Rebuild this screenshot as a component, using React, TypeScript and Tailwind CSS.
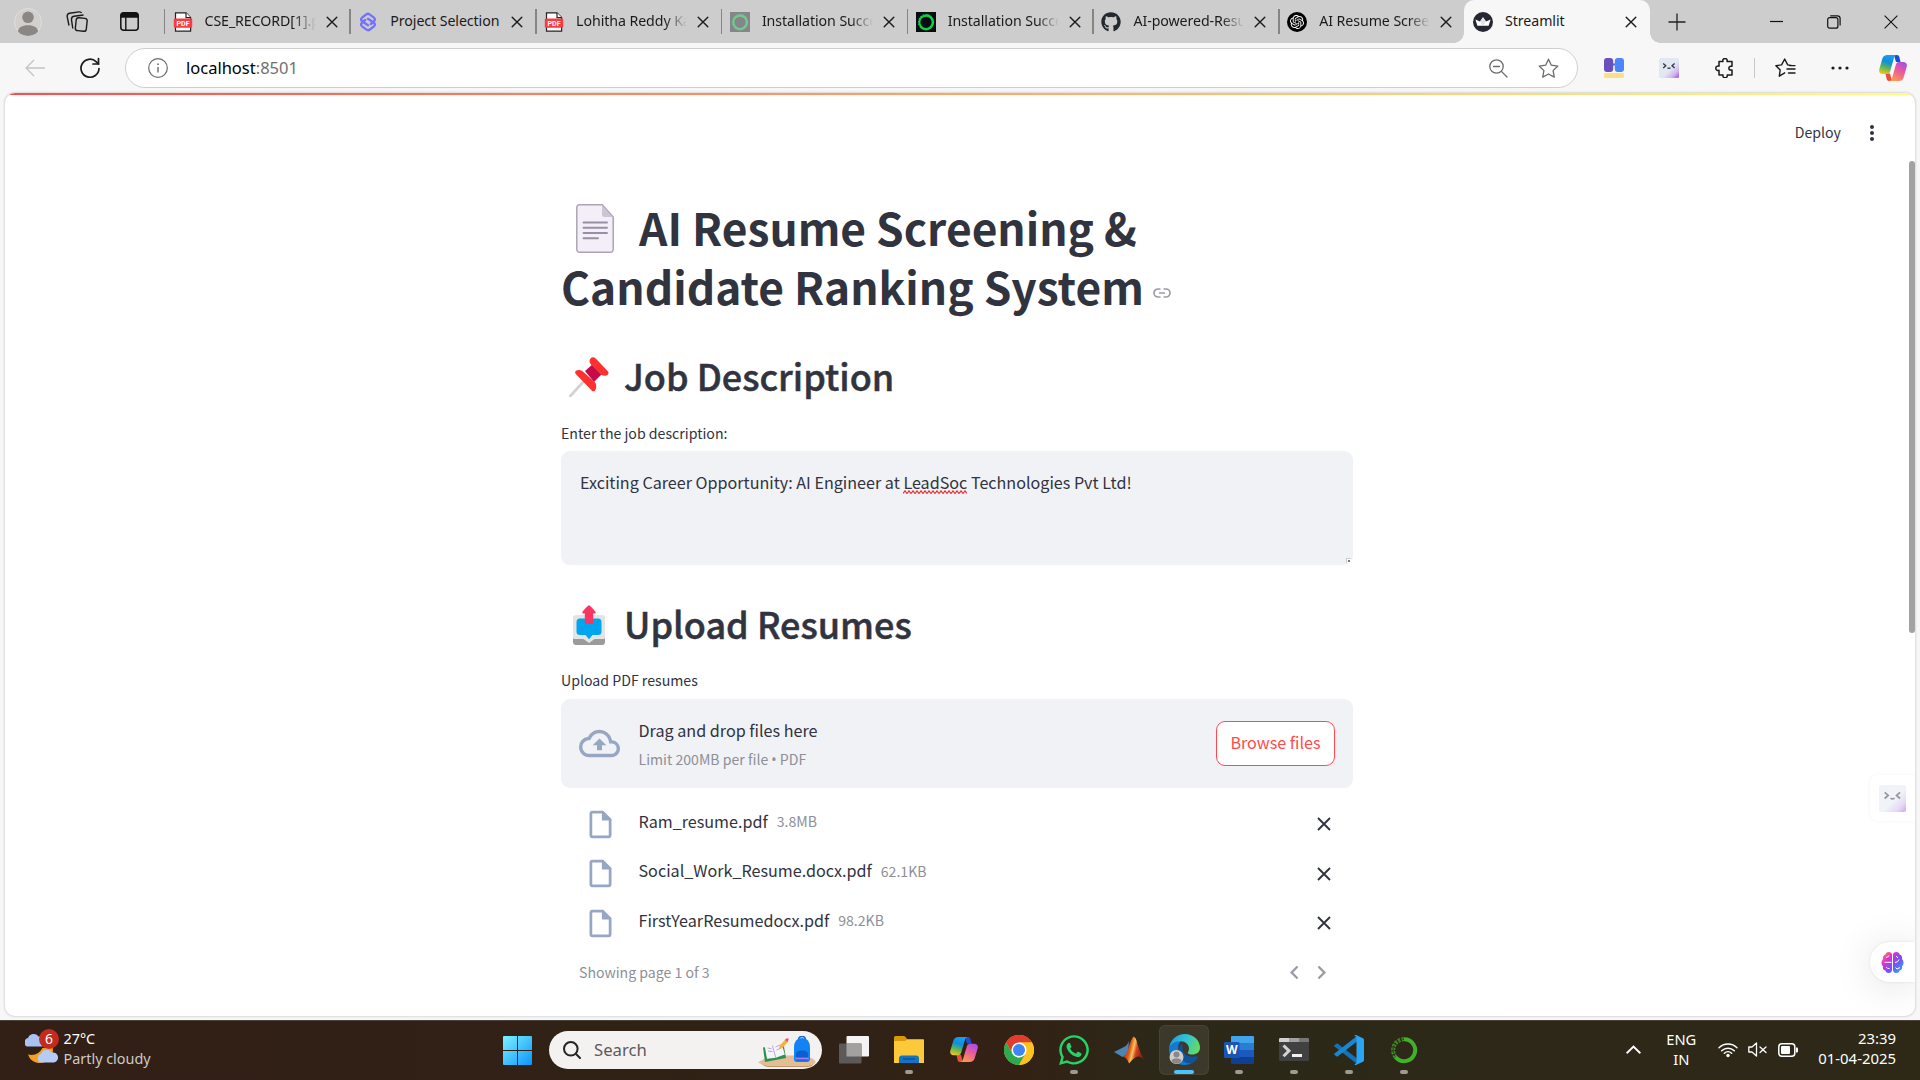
import type { ReactNode } from "react";
import { FaGithub, FaWhatsapp } from "react-icons/fa";
import { SiOpenai } from "react-icons/si";
import { MdChevronLeft, MdChevronRight, MdMoreVert, MdOutlineCloudUpload, MdOutlineInsertDriveFile } from "react-icons/md";

/* ---------- favicons ---------- */

const PdfIcon = () => (
  <svg width="20" height="20" viewBox="0 0 20 20">
    <path d="M2.5 .8h10.5l4.6 4.6v13.8H2.5z" fill="#fff" stroke="#222" strokeWidth="1.2" />
    <path d="M13 .8v4.8h4.6" fill="#fff" stroke="#222" strokeWidth="1.2" />
    <rect x=".8" y="6.5" width="18.4" height="9.3" rx="1" fill="#fb3b41" />
    <text x="10" y="13.9" textAnchor="middle" fontSize="7.2" fontWeight="700" fontFamily="Roboto, sans-serif" fill="#fff">PDF</text>
  </svg>
);

const SelectionIcon = () => (
  <svg width="20" height="20" viewBox="0 0 20 20" fill="none" stroke="#7471fb" strokeWidth="2.3" strokeLinejoin="round" strokeLinecap="round">
    <path d="M12.800 12 16 9.300Q17.800 7.500 16 5.700L11.500 2.300Q10 1.200 8.500 2.300L4 5.700Q2.200 7.500 4 9.300L10 13.200" />
    <path d="M7.200 8 4 10.700Q2.200 12.500 4 14.300L8.500 17.700Q10 18.800 11.500 17.700L16 14.300Q17.800 12.500 16 10.700L10 6.800" />
  </svg>
);

const RingIcon = ({ dim }: { dim?: boolean }) => (
  <svg width="20" height="20" viewBox="0 0 20 20">
    <rect width="20" height="20" fill={dim ? "#848689" : "#060b14"} />
    <circle cx="10" cy="10.3" r="6.9" fill="none" stroke={dim ? "#74c78e" : "#10cf41"} strokeWidth="2.6" />
    <circle cx="10" cy="10.3" r="7.8" fill="none" stroke={dim ? "#848689" : "#060b14"} strokeWidth=".9" strokeDasharray="1 2 .8 2 1 2 .8 2 1 2 1 100" transform="rotate(150 10 10.3)" />
  </svg>
);

const OpenAiIcon = () => (
  <span className="flex size-5 items-center justify-center rounded-full bg-black">
    <SiOpenai size={14} color="#fff" />
  </span>
);

const StreamlitIcon = () => (
  <svg width="20" height="20" viewBox="0 0 20 20">
    <circle cx="10" cy="10" r="10" fill="#262730" />
    <path d="M2.4 7.4 7 9.6l3-4.4 3 4.4 4.6-2.2-2 6.4H4.4z" fill="#fff" />
    <path d="M10 5.2 13 9.6l-3 4.2-3-4.2z" fill="#e3e3e6" />
  </svg>
);

const CloseX = () => (
  <svg width="12" height="12" viewBox="0 0 12 12" stroke="#1a1a1a" strokeWidth="1.4" strokeLinecap="round">
    <path d="M1.2 1.2 10.8 10.8M10.8 1.2 1.2 10.8" />
  </svg>
);

/* ---------- shared glyphs ---------- */

const Copilot = ({ id, w, h }: { id: string; w: number; h: number }) => (
  <svg width={w} height={h} viewBox="0 0 28 26" preserveAspectRatio="none">
    <defs>
      <linearGradient id={`${id}a`} x1=".5" y1="0" x2=".2" y2="1">
        <stop offset="0" stopColor="#1b9df0" />
        <stop offset=".35" stopColor="#0f8fd8" />
        <stop offset=".65" stopColor="#5fb35c" />
        <stop offset="1" stopColor="#f5cb12" />
      </linearGradient>
      <linearGradient id={`${id}b`} x1=".8" y1="0" x2=".3" y2="1">
        <stop offset="0" stopColor="#a54ee8" />
        <stop offset=".45" stopColor="#ea5a9c" />
        <stop offset="1" stopColor="#fb9a4f" />
      </linearGradient>
    </defs>
    <path d="M18 0h-3l2 7h4.6L20.400 2.200C20 .8 19.200 0 18 0z" fill="#1a4fd0" />
    <path d="M10 26h3l-2-7.500H6.400l1.200 5.300C8 25.200 8.800 26 10 26z" fill="#ee4d3a" />
    <path d="M8.500 0H18c-1.600 0-2.500 1-3 2.800l-3.800 13.400c-.5 1.600-1.500 2.800-3.200 2.800H3.800C.8 19-.3 17 .3 14.300L3.400 3.600C4.100 1.300 5.800 0 8.500 0z" fill={`url(#${id}a)`} />
    <path d="M19.500 26H10c1.600 0 2.500-1 3-2.800L16.800 9.800C17.300 8.200 18.300 7 20 7h4.200c3 0 4.100 2 3.500 4.700l-3.100 10.700c-.7 2.300-2.400 3.600-5.100 3.600z" fill={`url(#${id}b)`} />
  </svg>
);

const FaceIcon = ({ id, s, faded }: { id: string; s: number; faded?: boolean }) => (
  <svg width={s} height={s} viewBox="0 0 20 20" opacity={faded ? 0.5 : 1}>
    <defs>
      <linearGradient id={id} x1=".2" y1=".2" x2="1" y2="1">
        <stop offset=".45" stopColor="#e2e8f2" />
        <stop offset=".75" stopColor="#cfb5ef" />
        <stop offset="1" stopColor="#a14ede" />
      </linearGradient>
    </defs>
    <rect width="20" height="20" rx="1.500" fill={`url(#${id})`} />
    <path d="M4.200 5.400 6.800 7.700 4.200 10M15.600 5.400 13 7.700l2.600 2.300M8.500 9.700q1.500 1.200 3 0" fill="none" stroke="#2c3340" strokeWidth="1.300" />
  </svg>
);

/* ---------- tab strip ---------- */

const tabs: { title: string; icon: ReactNode }[] = [
  { title: "CSE_RECORD[1].pdf", icon: <PdfIcon /> },
  { title: "Project Selection", icon: <SelectionIcon /> },
  { title: "Lohitha Reddy Kasireddy", icon: <PdfIcon /> },
  { title: "Installation Success", icon: <RingIcon dim /> },
  { title: "Installation Success", icon: <RingIcon /> },
  { title: "AI-powered-Resume", icon: <FaGithub size={20} color="#24292f" /> },
  { title: "AI Resume Screening", icon: <OpenAiIcon /> },
];

function TabStrip() {
  return (
    <div className="flex h-[43px] bg-[#cdcdcd] text-[14.2px] tracking-[-0.08px] text-[#1b1b1b]">
      <div className="flex w-[163.500px] shrink-0 items-center pl-[14px]">
        <svg width="28" height="28" viewBox="0 0 28 28">
          <circle cx="14" cy="14" r="13.500" fill="#d2d0cd" stroke="#e0dfdd" />
          <circle cx="14" cy="9.300" r="5.800" fill="#8b8785" />
          <path d="M4 23.500c0-4 4-6.300 10-6.300s10 2.300 10 6.300a13.500 13.500 0 0 1-20 0z" fill="#8b8785" />
        </svg>
        <svg className="ml-[24px]" width="22" height="22" viewBox="0 0 22 22" fill="none" stroke="#1b1b1b" strokeWidth="1.400">
          <rect x="9.700" y="7" width="11" height="13" rx="2.500" transform="rotate(6 15 14)" />
          <path d="M6.800 17.500 5.500 8.800Q5.200 5.600 8 5.200L17.500 4" />
          <path d="M3 14.500 1.200 5.600Q.8 3 3.500 2.300L13 .9Q15 .7 15.500 2" />
        </svg>
        <svg className="ml-[32px]" width="19" height="19" viewBox="0 0 19 19">
          <rect x=".8" y=".8" width="17.400" height="17.400" rx="3" fill="none" stroke="#111" strokeWidth="1.500" />
          <path d="M.5 5.800V3.500a3 3 0 0 1 3-3h12a3 3 0 0 1 3 3v2.300z" fill="#111" />
          <path d="M5.800 5.500v12.500" stroke="#111" strokeWidth="1.400" />
        </svg>
      </div>
      {tabs.map((t, i) => (
        <div key={i} className="flex w-[185.800px] shrink-0 items-center">
          <div className="h-[25px] w-[1.500px] bg-[#858585]" />
          <span className="ml-[7.500px] flex size-5 shrink-0 items-center">{t.icon}</span>
          <span className="-mt-[2px] ml-[12px] w-[111px] overflow-hidden whitespace-nowrap leading-[22px] [mask-image:linear-gradient(to_right,#000_80%,transparent)] data-[full=true]:[mask-image:none]" data-full={i === 1}>
            {t.title}
          </span>
          <span className="ml-[10px]"><CloseX /></span>
        </div>
      ))}
      <div className="relative flex w-[186px] shrink-0 items-center rounded-t-[10px] bg-[#f7f7f7] pl-[9px]">
        <span className="absolute -left-[10px] bottom-0 size-[10px] bg-[radial-gradient(circle_at_0_0,#cdcdcd_9.500px,#f7f7f7_10px)]" />
        <span className="absolute -right-[10px] bottom-0 size-[10px] bg-[radial-gradient(circle_at_100%_0,#cdcdcd_9.500px,#f7f7f7_10px)]" />
        <StreamlitIcon />
        <span className="-mt-[2px] ml-[12px] w-[120px] leading-[22px]">Streamlit</span>
        <CloseX />
      </div>
      <div className="flex grow items-center pl-[18px]">
        <svg width="18" height="18" viewBox="0 0 18 18" stroke="#222" strokeWidth="1.300"><path d="M9 .5v17M.5 9h17" /></svg>
        <svg className="ml-[84px]" width="13" height="13" viewBox="0 0 13 13" stroke="#111" strokeWidth="1.200"><path d="M0 6.500h13" /></svg>
        <svg className="ml-[44px]" width="14" height="14" viewBox="0 0 14 14" fill="none" stroke="#111" strokeWidth="1.200">
          <rect x=".7" y="2.700" width="10.200" height="10.500" rx="2" />
          <path d="M3.200.8h7.200a2.700 2.700 0 0 1 2.700 2.700v7" />
        </svg>
        <svg className="ml-[43px]" width="14" height="14" viewBox="0 0 14 14" stroke="#111" strokeWidth="1.100"><path d="M.6.6 13.400 13.400M13.400.6.6 13.400" /></svg>
      </div>
    </div>
  );
}

/* ---------- address bar ---------- */

function Toolbar() {
  return (
    <div className="flex h-[50px] items-center">
      <svg className="ml-[25px]" width="20" height="18" viewBox="0 0 20 18" fill="none" stroke="#c4c4c4" strokeWidth="1.300"><path d="M20 9H1M9 1 1 9l8 8" /></svg>
      <svg className="ml-[34px]" width="22" height="22" viewBox="0 0 22 22" fill="none" stroke="#1b1b1b" strokeWidth="1.700" strokeLinecap="round">
        <path d="M20 11.500A9 9 0 1 1 17.300 4.800L19.500 7" />
        <path d="M19.500 1.500V7H14" />
      </svg>
      <div className="ml-[24px] flex h-[40px] w-[1453px] items-center rounded-full border border-[#cfcfcf] bg-white">
        <svg className="ml-[22px]" width="20" height="20" viewBox="0 0 20 20" fill="none" stroke="#6b6b6b" strokeWidth="1.200">
          <circle cx="10" cy="10" r="9.300" />
          <path d="M10 9v5.500" strokeWidth="1.400" />
          <circle cx="10" cy="6.200" r=".9" fill="#6b6b6b" stroke="none" />
        </svg>
        <span className="ml-[18px] text-[16.500px] leading-6 text-black">localhost<span className="text-[#707070]">:8501</span></span>
        <div className="ml-auto flex items-center gap-[30px] pr-[18px]">
          <svg width="19" height="19" viewBox="0 0 19 19" fill="none" stroke="#6b6b6b" strokeWidth="1.300" strokeLinecap="round">
            <circle cx="7.500" cy="7.500" r="6.700" />
            <path d="M12.400 12.400 18 18M4.500 7.500h6" />
          </svg>
          <svg width="21" height="21" viewBox="0 0 21 21" fill="none" stroke="#6b6b6b" strokeWidth="1.300" strokeLinejoin="round">
            <path d="m10.500 1.200 2.850 6 6.500.85-4.750 4.550 1.200 6.500-5.800-3.150-5.800 3.150 1.200-6.500L1.150 8.050l6.500-.85z" />
          </svg>
        </div>
      </div>
      <svg className="ml-[26px]" width="20" height="20" viewBox="0 0 20 20">
        <rect x="8" y="5.500" width="4" height="2" fill="#4b6fd8" />
        <rect x="0" y="0" width="9.200" height="14" rx="3" fill="#6a50bd" />
        <rect x="10.800" y="0" width="9.200" height="14" rx="3" fill="#4a87fb" />
        <rect x="0" y="15" width="20" height="5" rx="1.500" fill="#f9e184" />
      </svg>
      <span className="ml-[35px]"><FaceIcon id="faceTool" s={20} /></span>
      <svg className="ml-[36px]" width="20" height="20" viewBox="0 0 20 20" fill="none" stroke="#1b1b1b" strokeWidth="1.500" strokeLinejoin="round">
        <path d="M4 3.500h4a2.200 2.200 0 1 1 4 0h5v4.800h-1.200a1.900 1.900 0 0 0 0 3.800H17v4.900h-4.800a2.200 2.200 0 1 1-4.200 0H4v-4.700a2.300 2.300 0 1 1 0-4.200z" />
      </svg>
      <div className="ml-[19px] h-5 w-px bg-[#c8c8c8]" />
      <svg className="ml-[20px]" width="21" height="20" viewBox="0 0 21 20" fill="none" stroke="#1b1b1b" strokeWidth="1.400" strokeLinejoin="round" strokeLinecap="round">
        <path d="M9.700 14.800 4.300 18.200 5.200 12 .9 7.700l5.700-.8L9.700 1l3 5.900 3.500.5" />
        <path d="M12 11h8M13.500 15h6.500M14.500 7.600h5.500" />
      </svg>
      <svg className="ml-[35px]" width="18" height="4" viewBox="0 0 18 4" fill="#1b1b1b">
        <circle cx="2" cy="2" r="1.600" /><circle cx="9" cy="2" r="1.600" /><circle cx="16" cy="2" r="1.600" />
      </svg>
      <span className="ml-[30px]"><Copilot id="cpTool" w={28} h={26} /></span>
    </div>
  );
}

/* ---------- heading pictures ---------- */

const PageEmoji = () => (
  <svg width="38" height="49" viewBox="0 0 38 49">
    <path d="M3.500.8h22.700L37.200 13v32.500a2.700 2.700 0 0 1-2.700 2.700h-31A2.700 2.700 0 0 1 .8 45.500v-42A2.700 2.700 0 0 1 3.500.8z" fill="#f3eef8" stroke="#aba5b3" strokeWidth="1.500" />
    <path d="M26 1.500 36.500 13h-8A2.500 2.500 0 0 1 26 10.500z" fill="#cdc4d6" />
    <path d="M7.500 18.500h23.500M7.500 23.700h23.500M7.500 29h23.500M7.500 34.300H22" stroke="#998ea4" strokeWidth="1.900" strokeLinecap="round" />
  </svg>
);

const PinEmoji = () => (
  <svg width="40" height="40" viewBox="0 0 40 40">
    <path d="M1.300 39 15.500 23.500" stroke="#d3d3d3" strokeWidth="2.800" strokeLinecap="round" />
    <path d="M16 14 25 6l9 10-9 9z" fill="#c50c4b" />
    <path d="M21.500 1.500C23.200-.4 25.500 0 27 1.800L38.600 14c1.800 2 .8 3.900-1.200 4.500-2.800.8-5.400-.6-7.400-2.800L22.500 8C20.400 5.800 19.800 3.500 21.500 1.500z" fill="#fb322f" />
    <path d="M7 13.800c1.800-1.300 5-1.100 7.500 1.200L25.600 25c2.400 2.300 2 6.500.4 8.500-1.300 1.500-2.600.8-4-.8L7 17.300c-1.300-1.400-1-2.700 0-3.500z" fill="#fb322f" />
  </svg>
);

const OutboxEmoji = () => (
  <svg width="32" height="40" viewBox="0 0 32 40">
    <rect y="11" width="32" height="29" rx="3" fill="#9b9b9b" />
    <path d="M3 10h26a3 3 0 0 1 3 3v19.500a1.500 1.500 0 0 1-1.500 1.500h-9L16 38l-5.500-4h-9A1.500 1.500 0 0 1 0 32.500V13a3 3 0 0 1 3-3z" fill="#e4e4e4" />
    <path d="M7 13.500h18a3.500 3.500 0 0 1 3.500 3.500v9.500a3.500 3.500 0 0 1-3.500 3.500h-5.500L16 34.200 12.500 30H7a3.500 3.500 0 0 1-3.500-3.500V17A3.500 3.500 0 0 1 7 13.500z" fill="#00a6ed" />
    <path d="M16 .2c.8 0 6.800 6.300 6.800 7.300 0 .8-.8 1.100-2.600 1.100V18q0 1-1 1h-6.400q-1 0-1-1V8.600C10 8.600 9.200 8.300 9.200 7.500 9.200 6.500 15.200.2 16 .2z" fill="#fb3562" />
  </svg>
);

/* ---------- app page ---------- */

const files = [
  { name: "Ram_resume.pdf", size: "3.8MB" },
  { name: "Social_Work_Resume.docx.pdf", size: "62.1KB" },
  { name: "FirstYearResumedocx.pdf", size: "98.2KB" },
];

const BrainIcon = () => (
  <svg width="23" height="21" viewBox="0 0 23 21">
    <defs>
      <linearGradient id="brain" gradientUnits="userSpaceOnUse" x1="1" y1="0" x2="22" y2="20">
        <stop offset="0" stopColor="#ff9f2e" />
        <stop offset=".3" stopColor="#e52fd0" />
        <stop offset=".6" stopColor="#7a4cf5" />
        <stop offset="1" stopColor="#21b4ff" />
      </linearGradient>
    </defs>
    <path d="M7.500 0C9.800 0 11 1 11 3v15c0 2-1.300 3-3.300 3-2 0-3-1-3.300-2.500C2 18 1.500 16 2 14.200 0 13 0 8.500 2 7.300 1.300 4.800 2.500 3 4.400 2.500 4.700 1 5.800 0 7.500 0z" fill="url(#brain)" />
    <path d="M15.500 0C13.200 0 12 1 12 3v15c0 2 1.300 3 3.300 3 2 0 3-1 3.300-2.500 2.400-.5 2.900-2.500 2.400-4.300 2-1.200 2-5.700 0-6.900.7-2.500-.5-4.300-2.400-4.800C18.300 1 17.200 0 15.500 0z" fill="url(#brain)" />
    <path d="M5 5.500q2 0 3-2M3.500 10.300h7M5 15q1.500 2 3.500 1.500M14 10.500q3 0 4-3M15 4l2 2M14.500 15.500 16 17l3-1.500" fill="none" stroke="#fff" strokeWidth="1" />
  </svg>
);

function AppPage() {
  return (
    <div className="relative mx-[5px] h-[923px] overflow-hidden rounded-[10px] bg-white shadow-[0_0_2px_1px_rgba(0,0,0,0.12)] font-['Noto_Sans_CJK_SC',sans-serif] text-[#31333f]">
      <div className="h-[2px] bg-[linear-gradient(to_right,#ff4b4b,#ffb76b_60%,#fffd80)]" />
      <div className="flex h-[66px] items-center justify-end pt-[10px] pr-[31px]">
        <span className="-mt-[2px] text-[14.150px] leading-5">Deploy</span>
        <span className="ml-[19px]"><MdMoreVert size={24} /></span>
      </div>
      <div className="absolute top-[68px] right-0 h-[472px] w-[6px] rounded-[3px] bg-[#a2a2a2]" />

      <main className="mx-auto mt-[37px] w-[792px] -translate-x-[3px]">
        <h1 className="text-[44.300px] leading-[59px] font-bold">
          <span className="mr-[25px] ml-[15px] inline-block align-[-7px] leading-none"><PageEmoji /></span>AI Resume Screening &amp;
          <br />
          Candidate Ranking System
          <svg className="ml-[9px] inline-block align-[7px]" width="18" height="10" viewBox="0 0 18 10" fill="none" stroke="#9c9da4" strokeWidth="1.700">
            <path d="M7.500 1H5a4 4 0 0 0 0 8h2.500M10.500 1H13a4 4 0 0 1 0 8h-2.500M6 5h6" />
          </svg>
        </h1>

        <h2 className="mt-[35px] flex h-12 items-start text-[36px] leading-[48px] font-medium [-webkit-text-stroke:0.5px_#31333f]">
          <span className="mt-[6px] mr-[15px] ml-[8px]"><PinEmoji /></span>Job Description
        </h2>
        <p className="mt-[24px] text-[14.150px] leading-5">Enter the job description:</p>
        <div className="relative mt-2 h-[114px] rounded-[9px] bg-[#f0f2f6] px-[19px] pt-[18px] text-[16.140px] leading-[26px]">
          Exciting Career Opportunity: AI Engineer at{" "}
          <span className="relative inline-block">
            LeadSoc
            <svg className="absolute top-[21px] left-0" width="64" height="4" viewBox="0 0 64 4" fill="none" stroke="#ee2b2b" strokeWidth="1.100">
              <path d="M0 3.500 2 .8 4 3.500 6 .8 8 3.500 10 .8 12 3.500 14 .8 16 3.500 18 .8 20 3.500 22 .8 24 3.500 26 .8 28 3.500 30 .8 32 3.500 34 .8 36 3.500 38 .8 40 3.500 42 .8 44 3.500 46 .8 48 3.500 50 .8 52 3.500 54 .8 56 3.500 58 .8 60 3.500 62 .8 64 3.500" />
            </svg>
          </span>{" "}
          Technologies Pvt Ltd!
          <span className="absolute right-[2px] bottom-[2px] flex size-[5px] items-center justify-center border-t border-l border-[#c9cbd0] bg-white">
            <span className="size-[2px] bg-[#777]" />
          </span>
        </div>

        <h2 className="mt-[34px] flex h-12 items-start text-[36px] leading-[48px] font-medium [-webkit-text-stroke:0.5px_#31333f]">
          <span className="mt-[6px] mr-[19px] ml-[12px]"><OutboxEmoji /></span>Upload Resumes
        </h2>
        <p className="mt-[23px] text-[14.150px] leading-5">Upload PDF resumes</p>
        <div className="mt-[9px] flex h-[89px] items-center rounded-[9px] bg-[#f0f2f6] pr-[18px] pl-[18px]">
          <MdOutlineCloudUpload size={41} color="#97a6c3" />
          <div className="ml-[18.500px]">
            <div className="text-[16.150px] leading-[26px]">Drag and drop files here</div>
            <div className="mt-[6px] text-[14.100px] leading-5 text-[#8d8f98]">
              Limit 200MB per file <span className="font-['Noto_Sans']">•</span> PDF
            </div>
          </div>
          <div className="ml-auto flex h-[45px] w-[119px] items-center justify-center rounded-[9px] border border-[#ff4b4b] bg-white pb-[3px] text-[16.150px] leading-[26px] text-[#ff4b4b]">
            Browse files
          </div>
        </div>

        <div className="mt-[8px] pr-[22px] pl-[22.500px]">
          {files.map((f) => (
            <div key={f.name} className="flex h-[49.500px] items-center">
              <span className="mt-[7px]"><MdOutlineInsertDriveFile size={33} color="#97a6c3" /></span>
              <span className="ml-[22px] text-[16.150px] leading-[26px]">{f.name}</span>
              <span className="mt-px ml-[9px] text-[14.100px] leading-[26px] text-[#8d8f98]">{f.size}</span>
              <svg className="mt-[7px] ml-auto" width="14" height="14" viewBox="0 0 14 14" stroke="#31333f" strokeWidth="1.900"><path d="M1 1l12 12M13 1 1 13" /></svg>
            </div>
          ))}
        </div>
        <div className="mt-[14px] flex items-center pr-[18px] pl-[18px] text-[14.100px] leading-5 text-[#8d8f98]">
          Showing page 1 of 3
          <span className="ml-auto flex text-[#9a9ba2]">
            <MdChevronLeft size={27} />
            <MdChevronRight size={27} />
          </span>
        </div>
      </main>

      <div className="absolute top-[682px] right-0 flex h-[46px] w-[45px] items-center rounded-l-[8px] bg-white pl-[8.500px] shadow-[0_0_4px_rgba(0,0,0,0.05)]">
        <FaceIcon id="faceSide" s={27} faded />
      </div>
      <div className="absolute top-[849px] right-0 flex h-[40px] w-[45px] items-center rounded-l-full bg-white pl-[11px] shadow-[0_4px_40px_rgba(0,0,0,0.12),0_0_3px_rgba(0,0,0,0.1)]">
        <BrainIcon />
      </div>
    </div>
  );
}

/* ---------- taskbar icons ---------- */

const WeatherIcon = () => (
  <svg width="36" height="38" viewBox="0 0 36 38">
    <path d="M2 17.500a4.500 4.500 0 0 1 1-8.500A6 6 0 0 1 13.500 7.500 5 5 0 0 1 17 17.500z" fill="#a9c4f2" />
    <path d="M3 25.500Q13 27.500 17.500 19L27.500 18Q29.500 25 24 30.500 19 34.500 13 34 5.500 33 3 25.500z" fill="#f3a024" />
    <path d="M15.500 33.500a4.500 4.500 0 0 1 .5-8.500 6.200 6.200 0 0 1 11-1.500 5 5 0 0 1 2 10z" fill="#b5cdf6" />
    <circle cx="24" cy="10" r="10" fill="#c42b1c" />
    <text x="24" y="15.200" textAnchor="middle" fontSize="14" fontFamily="Noto Sans, sans-serif" fill="#fff">6</text>
  </svg>
);

const WindowsIcon = () => (
  <svg width="29" height="29" viewBox="0 0 29 29">
    <defs>
      <linearGradient id="win" gradientUnits="userSpaceOnUse" x1="0" y1="0" x2="29" y2="29">
        <stop offset="0" stopColor="#7af4fe" />
        <stop offset="1" stopColor="#0d93fb" />
      </linearGradient>
    </defs>
    <path d="M1 0h13v14H0V1q0-1 1-1zM15 0h13q1 0 1 1v13H15zM0 15h14v14H1q-1 0-1-1zM15 15h14v13q0 1-1 1H15z" fill="url(#win)" />
  </svg>
);

const SchoolArt = () => (
  <svg width="58" height="32" viewBox="0 0 58 32">
    <path d="M0 26.500Q3 24 14 19.500h34l8 4q3 3 0 4.500-2 3-8 3H12q-6-1-12-4.500z" fill="#e3bd93" />
    <path d="M3 28q5 2.200 9 2.200h36q5 0 7-2.200-1 3-7 3H12q-5 0-9-3z" fill="#b98a5b" />
    <path d="m5 11.500 2 14.500 21-4-2.500-14z" fill="#2f8f4e" />
    <path d="m6.500 9 8 .8L23 5.500l3.800 13-9 3.300-8.800 1z" fill="#f6f3fa" />
    <path d="m14.500 9.800 3.300 12M9.500 12l4 .6M10 15l4.500.6M17.500 11l5-2.300M18.500 14l5-2.200" stroke="#a59bb4" strokeWidth=".8" fill="none" />
    <path d="m21 13 .8-3.500 6-6.500 2.600 2.300-6 6.600z" fill="#f5b13a" />
    <path d="m26.800 4 1.500-1.500q2-1 2.500.8L29.400 6z" fill="#ee5a63" />
    <path d="M40.500 4.500q0-4 3.500-4t3.500 4" fill="none" stroke="#1665d8" strokeWidth="1.500" />
    <path d="M36 12q0-10 8-10t8 10v11q0 3-3 3H39q-3 0-3-3z" fill="#1382f5" />
    <path d="M38 18q0-3.500 6-3.500t6 3.500v5q0 1.500-1.500 1.500h-9q-1.500 0-1.500-1.500z" fill="#0a5fd1" />
    <path d="M37.500 22.500h13" stroke="#a77cf0" strokeWidth="1.800" />
  </svg>
);

const TaskViewIcon = () => (
  <svg width="30" height="28" viewBox="0 0 30 28">
    <rect x="7.500" y="0" width="22.500" height="20.500" rx="1" fill="#f4f4f4" />
    <rect x="0" y="7.500" width="22.500" height="20" rx="1" fill="#5c5a58" />
    <rect x="7.500" y="7.500" width="15" height="13" fill="#a3a19f" />
  </svg>
);

const FolderIcon = () => (
  <svg width="30" height="27" viewBox="0 0 30 27">
    <path d="M0 1.500Q0 0 1.500 0h8q1 0 2 1l1.700 2.200H30V12H0z" fill="#d99a08" />
    <path d="M0 5h11l2-1.500h15.500q1.500 0 1.500 1.500v22H0z" fill="#fbc93a" />
    <path d="M5 27v-4.500q0-3 3-3h14q3 0 3 3V27z" fill="#1573c4" />
    <path d="M9 23h12" stroke="#0b4f93" strokeWidth="1.300" />
  </svg>
);

const ChromeIcon = () => (
  <svg width="30" height="30" viewBox="0 0 30 30">
    <circle cx="15" cy="15" r="15" fill="#fbc116" />
    <path d="M2 7.500A15 15 0 0 1 28 7.500H15L8.500 18.800z" fill="#e33b2e" />
    <path d="M2 7.500A15 15 0 0 0 15 30l6.500-11.200H8.500z" fill="#2da94f" />
    <path d="M28 7.500H15L21.500 18.800 15 30A15 15 0 0 0 28 7.500z" fill="#fcc31e" />
    <circle cx="15" cy="15" r="7.600" fill="#fff" />
    <circle cx="15" cy="15" r="6" fill="#3f86f4" />
  </svg>
);

const MatlabIcon = () => (
  <svg width="30" height="28" viewBox="0 0 30 28">
    <defs>
      <linearGradient id="mat" x1="0" y1="0" x2="1" y2=".3">
        <stop offset="0" stopColor="#6e1d14" />
        <stop offset=".45" stopColor="#e05a1c" />
        <stop offset=".6" stopColor="#f8c45a" />
        <stop offset=".75" stopColor="#d0421c" />
        <stop offset="1" stopColor="#8e2414" />
      </linearGradient>
    </defs>
    <path d="M0 16 9 11.500q4-1.500 6-6.500L14 18l-5.500 3z" fill="#4a86b5" />
    <path d="M8.500 20.500q3.500-1 5.500-7Q17 3 19.500.5 22 1 23.500 8q2.500 9 6 15-3-3-6-2.500-4 1.500-8.500 7-2-6-6.500-7z" fill="url(#mat)" />
  </svg>
);

const EdgeIcon = () => (
  <svg width="31" height="31" viewBox="0 0 31 31">
    <defs>
      <linearGradient id="edgeTop" x1="0" y1=".3" x2="1" y2=".6">
        <stop offset="0" stopColor="#1f9fe0" />
        <stop offset=".5" stopColor="#33c3d3" />
        <stop offset="1" stopColor="#64dd5a" />
      </linearGradient>
    </defs>
    <path d="M0 15.500C0 7 7 3 13 6q-5 4-3.500 11Q11.500 26 20 27q5 .5 8-3-4.500 7-12.500 7C7 31 0 24 0 15.500z" fill="#1479d3" />
    <path d="M9.500 17Q10 11 14 9q-1.500 4 0 8 3 6.500 11 5.500 4-.5 4 .5-3 6-9.500 6.500Q10 28 9.500 17z" fill="#0f539e" />
    <path d="M.5 12.500C2 5 8.500 0 15.500 0 25 0 31 6.500 31 13.500c0 5-4 7-7.500 7-3 0-4.800-.8-4.800-1.800 0-.7 1.300-1.500 1.300-4C20 10.500 16.500 7.300 11.500 7.300 6.500 7.300 2.500 9 .5 12.500z" fill="url(#edgeTop)" />
    <circle cx="7.500" cy="23" r="7" fill="#cfcdca" />
    <circle cx="7.500" cy="20.600" r="3" fill="#8b8785" />
    <path d="M2.500 27q.5-2.800 5-2.800t5 2.800q-2 2.800-5 2.800t-5-2.800z" fill="#8b8785" />
  </svg>
);

const WordIcon = () => (
  <svg width="30" height="28" viewBox="0 0 30 28">
    <path d="M7 1q0-1 1-1h21q1 0 1 1v6H7z" fill="#41a5ee" />
    <path d="M7 7h23v7H7z" fill="#2b7cd3" />
    <path d="M7 14h23v7H7z" fill="#185abd" />
    <path d="M7 21h23v6q0 1-1 1H8q-1 0-1-1z" fill="#103f91" />
    <rect y="6" width="15.500" height="16" rx="1.200" fill="#1a55b6" />
    <text x="7.750" y="18.300" textAnchor="middle" fontSize="12" fontWeight="700" fontFamily="Open Sans, sans-serif" fill="#fff">W</text>
  </svg>
);

const TerminalIcon = () => (
  <svg width="30" height="23" viewBox="0 0 30 23">
    <rect width="30" height="23" rx="1.200" fill="#414141" />
    <path d="M0 4V1.200Q0 0 1.200 0H10v4z" fill="#d0d0d0" />
    <path d="M10 0h10v4H10z" fill="#a0a0a0" />
    <path d="M20 0h8.800Q30 0 30 1.200V4H20z" fill="#777" />
    <path d="m4.500 7.500 5.500 5.300-5.500 5.400" fill="none" stroke="#d2d2d2" strokeWidth="3" />
    <path d="M13 17.500h10" stroke="#f2f2f2" strokeWidth="3" />
  </svg>
);

const CodeIcon = () => (
  <svg width="30" height="30" viewBox="0 0 30 30">
    <path d="m.5 10.300 1.800-1.600q.8-.6 1.600 0L23 23.500V29L.5 11.500q-.6-.6 0-1.200z" fill="#1273ba" />
    <path d="m.5 19.700 1.800 1.600q.8.600 1.600 0L23 6.500V1L.5 18.500q-.6.6 0 1.200z" fill="#1a86d0" />
    <path d="m22 0 7 3.300q1 .5 1 1.600v20.200q0 1.100-1 1.600L22 30q-1 .3-1.500-.7L22.500 28V2l-2-1.300Q21-.3 22 0z" fill="#2aa5f3" />
  </svg>
);

const AnacondaIcon = () => (
  <svg width="28" height="28" viewBox="0 0 28 28" fill="none">
    <path d="M14 3.200A11 11 0 1 1 5.500 21" stroke="#43b02a" strokeWidth="4" />
    <path d="M14 3.200A11 11 0 0 0 5.500 21" stroke="#43b02a" strokeWidth="4" strokeDasharray="2.500 1.100" opacity=".75" />
    <path d="M14 3.200A11 11 0 0 0 5.500 21" stroke="#2d2919" strokeWidth="1.100" strokeDasharray="1.500 1.500" />
  </svg>
);

const apps: { icon: ReactNode; run?: boolean; active?: boolean }[] = [
  { icon: <TaskViewIcon /> },
  { icon: <FolderIcon />, run: true },
  { icon: <Copilot id="cpBar" w={28} h={25} /> },
  { icon: <ChromeIcon /> },
  { icon: <FaWhatsapp size={34} color="#25d366" />, run: true },
  { icon: <MatlabIcon /> },
  { icon: <EdgeIcon />, active: true },
  { icon: <WordIcon />, run: true },
  { icon: <TerminalIcon />, run: true },
  { icon: <CodeIcon />, run: true },
  { icon: <AnacondaIcon />, run: true },
];

function Taskbar() {
  return (
    <footer className="flex h-[60px] items-center border-t border-[#4a4238] bg-[linear-gradient(to_right,#321f15,#302216_45%,#332114_52%,#2c2818_60%,#2e2817)] text-[14.400px] text-white">
      <div className="flex w-[503px] items-center pl-[25px]">
        <span className="-mt-[6px]"><WeatherIcon /></span>
        <div className="-mt-[4px] ml-[2.500px] leading-5">
          <div>27°C</div>
          <div className="text-[#cfcac6]">Partly cloudy</div>
        </div>
      </div>
      <WindowsIcon />
      <div className="-mt-px ml-[17px] flex h-[38px] w-[273px] items-center rounded-full bg-[#f4f2f1] pl-[14px]">
        <svg width="18" height="18" viewBox="0 0 18 18" fill="none" stroke="#242424" strokeWidth="2" strokeLinecap="round">
          <circle cx="7.800" cy="7.800" r="6.800" /><path d="m13 13 4 4" />
        </svg>
        <span className="ml-[13px] text-[16.700px] leading-6 text-[#5c5a59]">Search</span>
        <span className="mt-[3px] ml-auto pr-[6px]"><SchoolArt /></span>
      </div>
      <div className="-mt-[2px] ml-[7px] flex gap-[5px]">
        {apps.map((a, i) => (
          <div key={i} className="relative flex size-[50px] items-center justify-center rounded-[6px] border border-transparent data-[on=true]:border-white/5 data-[on=true]:bg-white/8" data-on={!!a.active}>
            {a.icon}
            {a.run && <span className="absolute bottom-0 h-[4px] w-[8px] rounded-full bg-[#9d9a93]" />}
            {a.active && <span className="absolute bottom-0 h-[4px] w-[20px] rounded-full bg-[#4cc2ff]" />}
          </div>
        ))}
      </div>
      <div className="-mt-[2px] ml-auto flex items-center pr-[24px]">
        <svg width="15" height="9" viewBox="0 0 15 9" fill="none" stroke="#fff" strokeWidth="1.900" strokeLinecap="round"><path d="m1.200 7.700 6.300-6.200 6.300 6.200" /></svg>
        <div className="-mt-[2px] ml-[25px] text-center text-[14.700px] leading-5">
          <div>ENG</div>
          <div>IN</div>
        </div>
        <svg className="ml-[22px]" width="20" height="16" viewBox="0 0 20 16" fill="none" stroke="#fff" strokeWidth="1.500" strokeLinecap="round">
          <path d="M1 5.800a12.800 12.800 0 0 1 18 0M3.700 8.700a9 9 0 0 1 12.600 0M6.400 11.300a5.200 5.200 0 0 1 7.200 0" />
          <circle cx="10" cy="13.500" r="1.700" fill="#fff" stroke="none" />
        </svg>
        <svg className="ml-[10px]" width="19" height="15" viewBox="0 0 19 15" fill="none" stroke="#fff" strokeWidth="1.300" strokeLinejoin="round" strokeLinecap="round">
          <path d="M.8 5v5H4l4.500 4V1L4 5zM12 5l6 5.500M18 5l-6 5.500" />
        </svg>
        <svg className="ml-[11px]" width="20" height="14" viewBox="0 0 20 14" fill="none" stroke="#fff" strokeWidth="1.500">
          <rect x=".8" y=".8" width="16" height="12.400" rx="3" />
          <rect x="3" y="3" width="9" height="8" rx="1" fill="#fff" stroke="none" />
          <path d="M18 4.500h1q1 0 1 1v3q0 1-1 1h-1z" fill="#fff" stroke="none" />
        </svg>
        <div className="-mt-[3px] ml-[20px] text-right text-[14.900px] leading-5">
          <div>23:39</div>
          <div>01-04-2025</div>
        </div>
      </div>
    </footer>
  );
}

export default function App() {
  return (
    <div className="flex h-[1080px] w-[1920px] flex-col overflow-hidden bg-[#f7f7f7] font-['Noto_Sans',sans-serif]">
      <TabStrip />
      <Toolbar />
      <AppPage />
      <div className="h-[4px]" />
      <Taskbar />
    </div>
  );
}
